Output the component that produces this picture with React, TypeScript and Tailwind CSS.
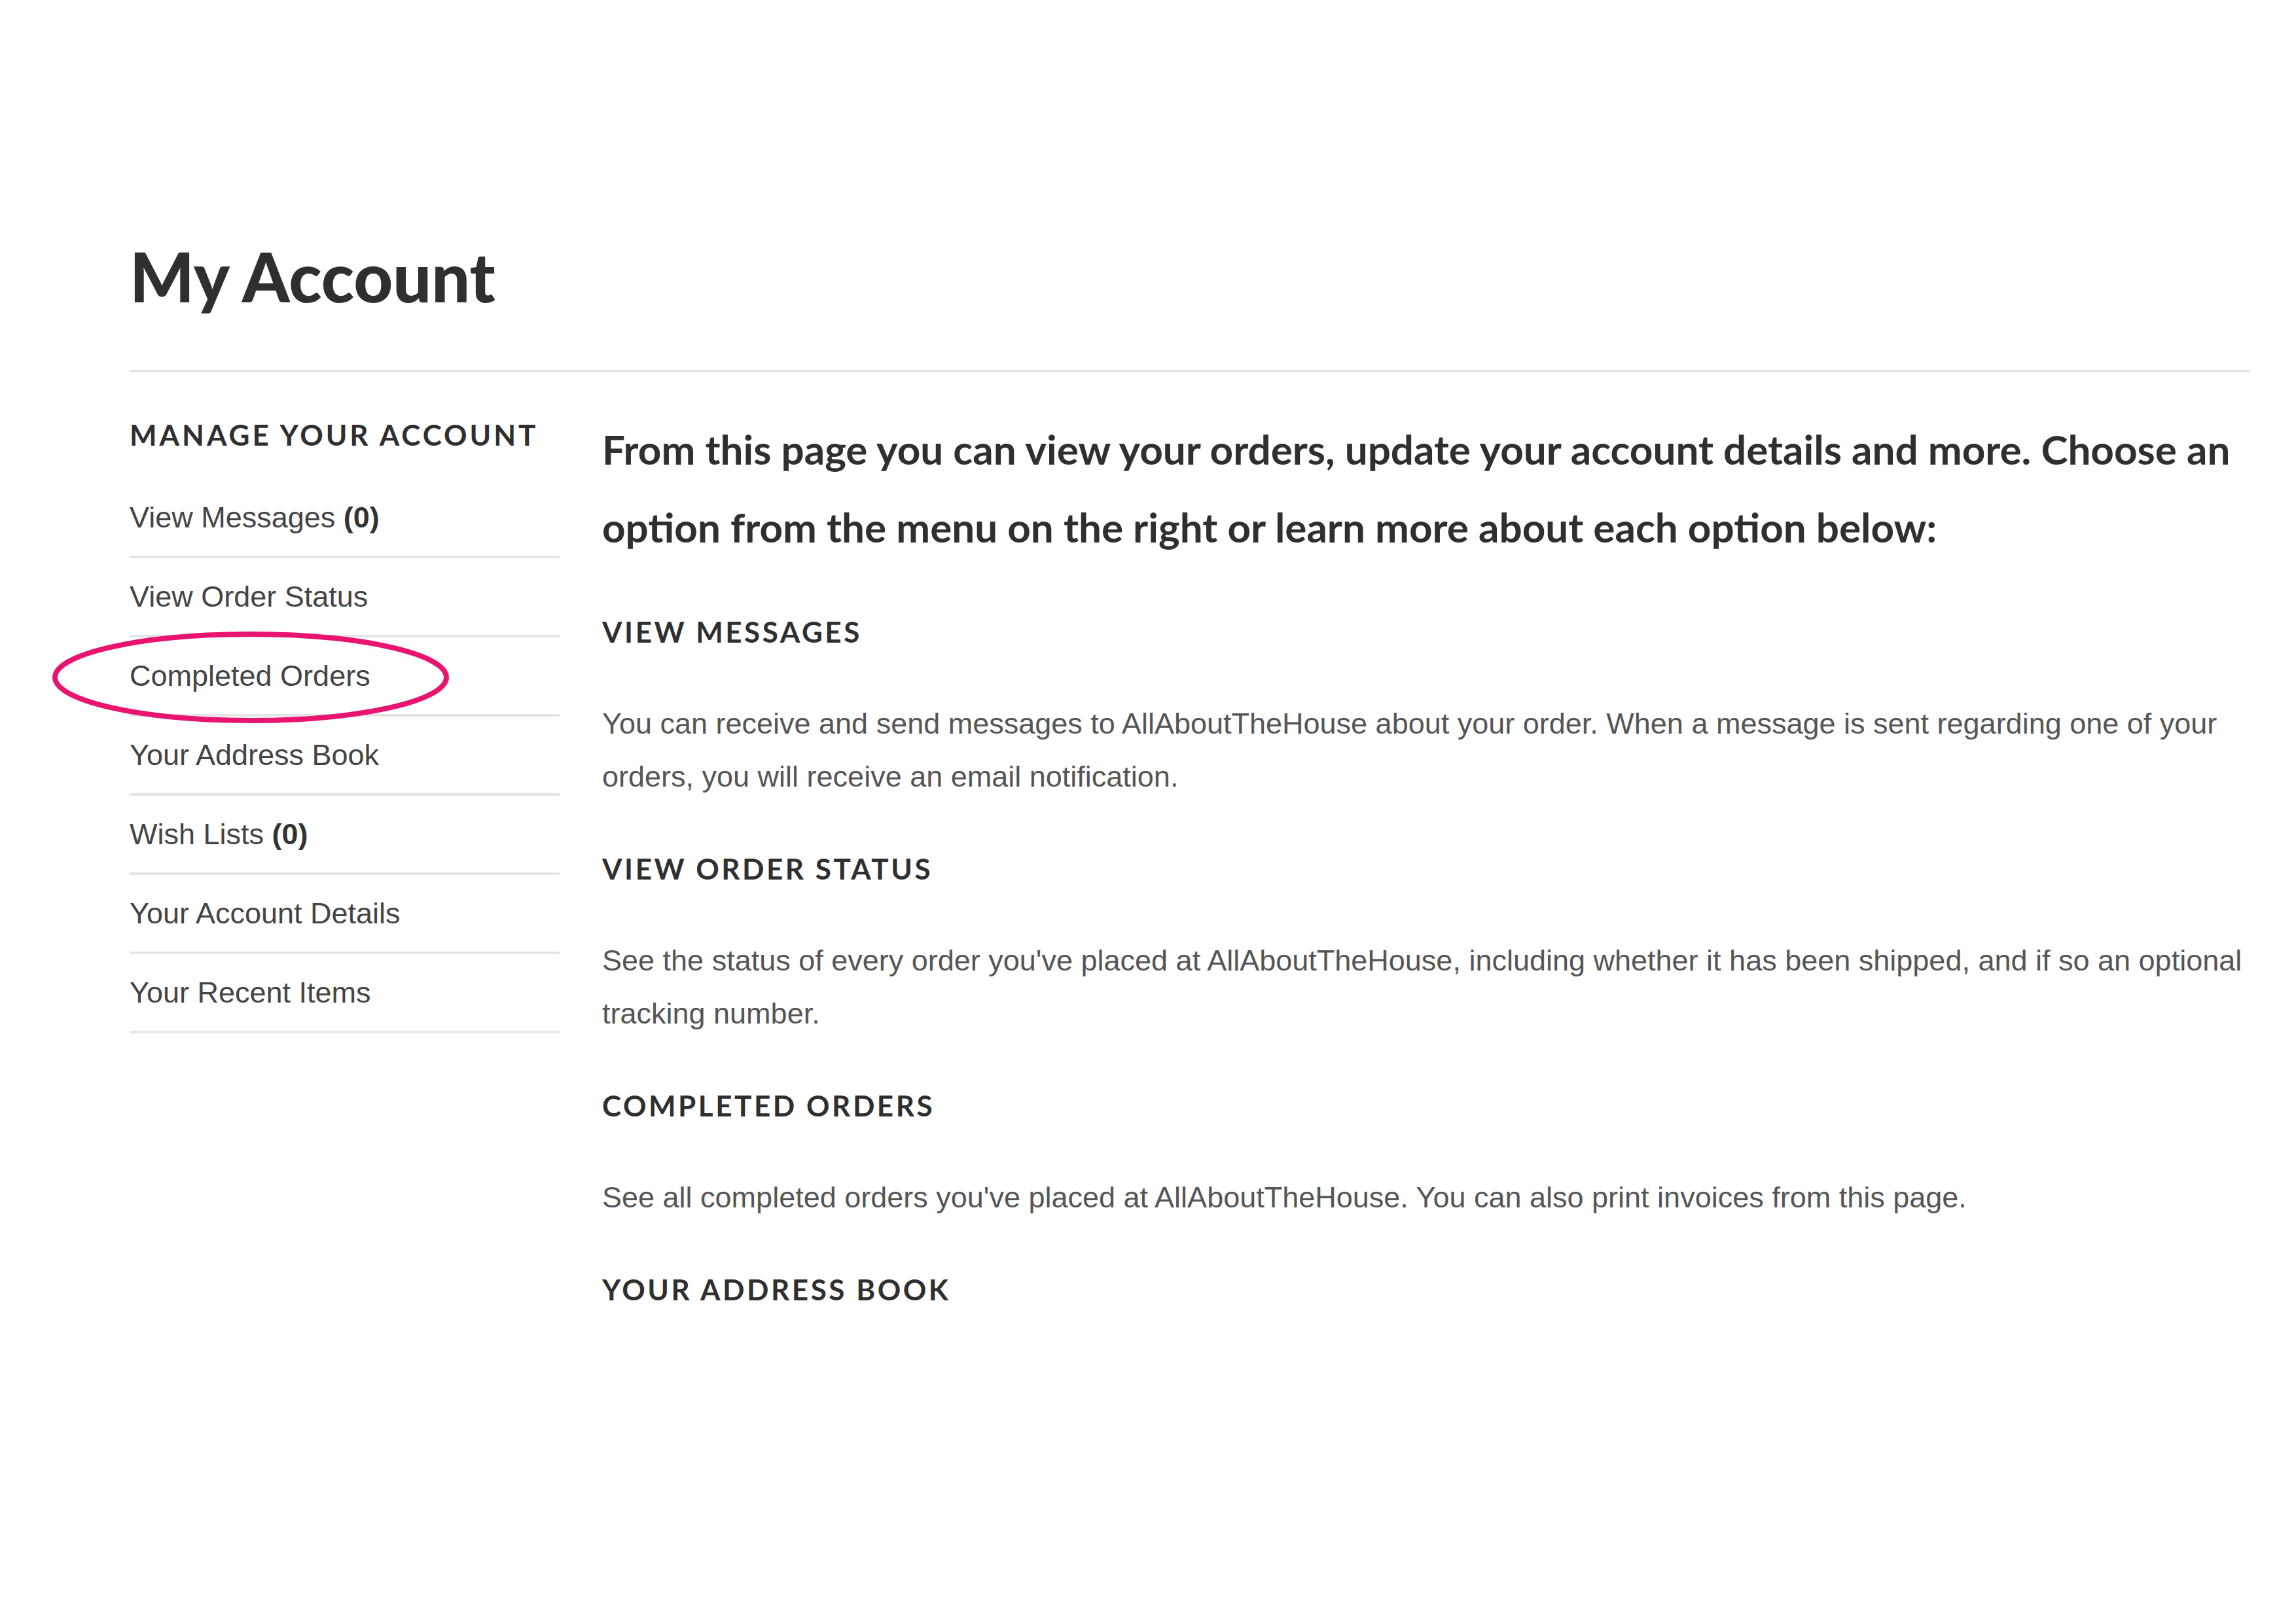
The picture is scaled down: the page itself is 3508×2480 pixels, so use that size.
import React from "react";

const items: { label: string; count?: string }[] = [
  { label: "View Messages", count: "(0)" },
  { label: "View Order Status" },
  { label: "Completed Orders" },
  { label: "Your Address Book" },
  { label: "Wish Lists", count: "(0)" },
  { label: "Your Account Details" },
  { label: "Your Recent Items" },
];

const sections = [
  {
    h: "VIEW MESSAGES",
    p: "You can receive and send messages to AllAboutTheHouse about your order. When a message is sent regarding one of your orders, you will receive an email notification.",
  },
  {
    h: "VIEW ORDER STATUS",
    p: "See the status of every order you've placed at AllAboutTheHouse, including whether it has been shipped, and if so an optional tracking number.",
  },
  {
    h: "COMPLETED ORDERS",
    p: "See all completed orders you've placed at AllAboutTheHouse. You can also print invoices from this page.",
  },
];

export default function App() {
  return (
    <div className="relative w-[3508px] h-[2480px] bg-white overflow-hidden pl-[198px] pr-[70px] pt-[362px] text-[#333]">
      <h1 className="font-[family-name:Lato,sans-serif] font-black text-[104px] leading-[120px] text-[#2f2f2f]">My Account</h1>
      <div className="mt-[83px] border-t-[4px] border-[#e5e5e5]" />
      <div className="flex gap-[65px]">
        <div className="w-[657px] shrink-0 mt-[65px]">
          <div className="font-[family-name:Lato,sans-serif] font-bold text-[44px] leading-[60px] tracking-[0.09em] text-[#2f2f2f] pb-[38px]">
            MANAGE YOUR ACCOUNT
          </div>
          {items.map((it) => (
            <div
              key={it.label}
              className="h-[121px] flex items-center border-b-[4px] border-[#e5e5e5] font-[family-name:Liberation_Sans,Arial,sans-serif] text-[45px] text-[#444]"
            >
              <span>
                {it.label}
                {it.count && <b className="text-[#333]"> {it.count}</b>}
              </span>
            </div>
          ))}
        </div>
        <div className="flex-1 mt-[58px]">
          <p className="font-[family-name:Lato,sans-serif] font-bold text-[62px] leading-[119px] text-[#2f2f2f]">
            From this page you can view your orders, update your account details and more. Choose an option from the menu on the right or learn more about each option below:
          </p>
          {sections.map((s) => (
            <div key={s.h}>
              <h2 className="mt-[70px] font-[family-name:Lato,sans-serif] font-bold text-[44px] leading-[60px] tracking-[0.08em] text-[#2f2f2f]">{s.h}</h2>
              <p className="mt-[70px] font-[family-name:Liberation_Sans,Arial,sans-serif] text-[45px] leading-[81px] text-[#555]">{s.p}</p>
            </div>
          ))}
          <h2 className="mt-[70px] font-[family-name:Lato,sans-serif] font-bold text-[44px] leading-[60px] tracking-[0.08em] text-[#2f2f2f]">YOUR ADDRESS BOOK</h2>
        </div>
      </div>
      <svg className="absolute left-[75px] top-[961px]" width="616" height="148" viewBox="0 0 616 148">
        <ellipse cx="308" cy="74" rx="299" ry="66" fill="none" stroke="#e8146f" strokeWidth="8" />
      </svg>
    </div>
  );
}
